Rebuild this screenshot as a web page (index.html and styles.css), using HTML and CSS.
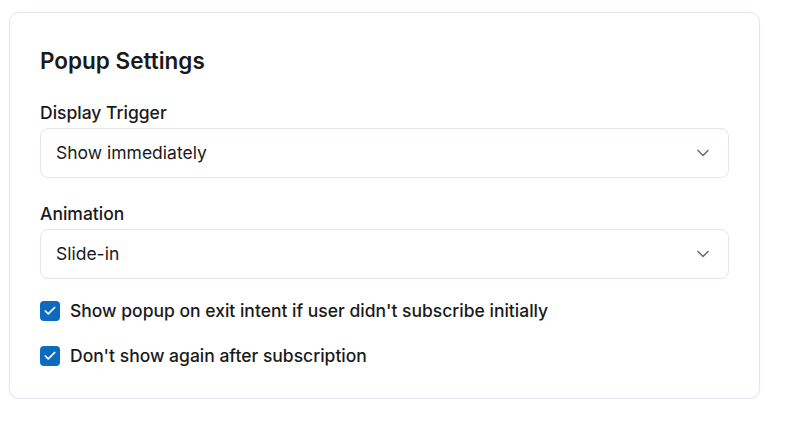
FILE: index.html
```html
<!DOCTYPE html>
<html lang="en">
<head>
<meta charset="utf-8">
<title>Popup Settings</title>
<link rel="stylesheet" href="styles.css">
</head>
<body>
<section class="card">
  <h2 class="card-title">Popup Settings</h2>
  <div class="field">
    <label class="field-label">Display Trigger</label>
    <div class="select">
      <span class="select-value">Show immediately</span>
      <svg class="chevron" width="20" height="20" viewBox="0 0 24 24" fill="none" stroke="currentColor" stroke-width="2" stroke-linecap="round" stroke-linejoin="round"><path d="m6 9 6 6 6-6"/></svg>
    </div>
  </div>
  <div class="field">
    <label class="field-label">Animation</label>
    <div class="select">
      <span class="select-value">Slide-in</span>
      <svg class="chevron" width="20" height="20" viewBox="0 0 24 24" fill="none" stroke="currentColor" stroke-width="2" stroke-linecap="round" stroke-linejoin="round"><path d="m6 9 6 6 6-6"/></svg>
    </div>
  </div>
  <div class="checks">
    <label class="check-row">
      <span class="checkbox"><svg width="14" height="14" viewBox="0 0 24 24" fill="none" stroke="#fff" stroke-width="3" stroke-linecap="round" stroke-linejoin="round"><path d="M20 6 9 17l-5-5"/></svg></span>
      <span class="check-text">Show popup on exit intent if user didn't subscribe initially</span>
    </label>
    <label class="check-row">
      <span class="checkbox"><svg width="14" height="14" viewBox="0 0 24 24" fill="none" stroke="#fff" stroke-width="3" stroke-linecap="round" stroke-linejoin="round"><path d="M20 6 9 17l-5-5"/></svg></span>
      <span class="check-text">Don't show again after subscription</span>
    </label>
  </div>
</section>
</body>
</html>
```
FILE: styles.css
```css
* { box-sizing: border-box; }
html, body { background: #ffffff; }
body {
  margin: 0;
  padding: 12px 36px 0 9px;
  font-family: Inter, "Noto Sans", sans-serif;
  color: #1a1a1a;
}
.card {
  width: 751px;
  border: 1px solid #e1e6ef;
  border-radius: 10px;
  padding: 33px 30px 30px 30px;
  background: #fff;
  box-shadow: 0 1px 2px rgba(15, 23, 42, 0.04);
}
.card-title {
  margin: 0 0 25px 0;
  font-size: 22.5px;
  line-height: 30px;
  font-weight: 600;
  color: #1a1a1a;
}
.field { margin-bottom: 24px; }
.field-label {
  display: block;
  font-size: 17.5px;
  line-height: 24px;
  font-weight: 500;
  color: #1a1a1a;
  margin-bottom: 3px;
}
.select {
  height: 50px;
  border: 1px solid #e1e6ef;
  border-radius: 8px;
  display: flex;
  align-items: center;
  justify-content: space-between;
  padding: 0 15px 0 15px;
}
.select-value {
  font-size: 17.5px;
  line-height: 24px;
  color: #1a1a1a;
}
.chevron { color: #6b7280; }
.checks {
  display: flex;
  flex-direction: column;
  gap: 21px;
  margin-top: -4px;
}
.check-row {
  display: flex;
  align-items: center;
  gap: 10px;
  height: 24px;
}
.checkbox {
  width: 20px;
  height: 20px;
  border-radius: 4px;
  background: #0d6bbf;
  display: flex;
  align-items: center;
  justify-content: center;
}
.check-text {
  font-size: 17.5px;
  line-height: 24px;
  font-weight: 500;
  color: #1a1a1a;
}
```
